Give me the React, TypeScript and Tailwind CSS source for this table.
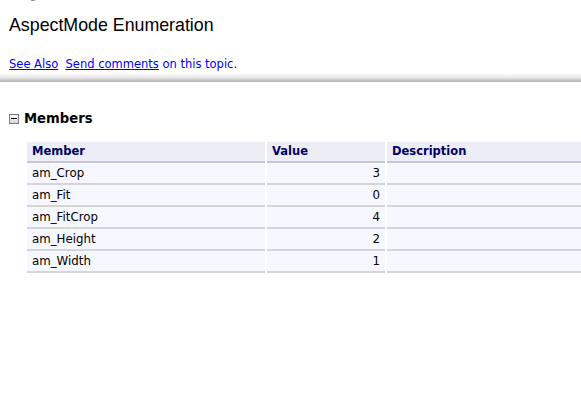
import React from "react";

const rows: [string, string][] = [
  ["am_Crop", "3"],
  ["am_Fit", "0"],
  ["am_FitCrop", "4"],
  ["am_Height", "2"],
  ["am_Width", "1"],
];

const verdana = { fontFamily: '"DejaVu Sans", Verdana, sans-serif' };

export default function App() {
  return (
    <div className="w-[581px] h-[411px] overflow-hidden bg-white" style={verdana}>
      <div className="h-[2px] overflow-hidden pl-[9px]">
        <div className="-mt-[11px] text-[11px] leading-[13px] text-[#888]">ImageGear ActiveX API Reference</div>
      </div>
      <div
        className="pl-[9px] pt-[13px] text-[17.8px] leading-[21px] text-black"
        style={{ fontFamily: '"Liberation Sans", Arial, sans-serif' }}
      >
        AspectMode Enumeration
      </div>
      <div className="pl-[9px] pt-[21px] text-[11.5px] leading-[15px] text-[#0000ff]">
        <span className="underline">See Also</span>
        <span>&nbsp;&nbsp;</span>
        <span className="underline">Send comments</span>
        <span> on this topic.</span>
      </div>
      <div className="mt-[1px] h-[9px] bg-gradient-to-b from-white via-[#e8e8e8] to-[#b0b0b0]" />
      <div className="flex items-center pl-[9px] pt-[28px]">
        <div className="w-[10px] h-[10px] border border-[#7a7a7a] bg-gradient-to-b from-white to-[#d6d6d6] flex items-center justify-center">
          <div className="w-[6px] h-[1px] bg-black" />
        </div>
        <div className="ml-[5px] text-[13.2px] leading-[17px] font-bold text-black">Members</div>
      </div>
      <div className="pl-[27px] pt-[15px] text-[11.8px] leading-[13px]">
        <div className="flex gap-[2px] text-[11.5px]">
          <div className="w-[238px] shrink-0 bg-[#ededf6] border-b-2 border-[#c6c6d8] px-[5px] pt-[3px] pb-[3px] font-bold text-[#000066]">Member</div>
          <div className="w-[118px] shrink-0 bg-[#ededf6] border-b-2 border-[#c6c6d8] px-[5px] pt-[3px] pb-[3px] font-bold text-[#000066]">Value</div>
          <div className="flex-1 bg-[#ededf6] border-b-2 border-[#c6c6d8] px-[5px] pt-[3px] pb-[3px] font-bold text-[#000066]">Description</div>
        </div>
        {rows.map(([name, val]) => (
          <div key={name} className="flex gap-[2px]">
            <div className="w-[238px] shrink-0 bg-[#f7f7ff] border-b-2 border-[#d5d5d5] px-[5px] pt-[4px] pb-[3px] text-black">{name}</div>
            <div className="w-[118px] shrink-0 bg-[#f7f7ff] border-b-2 border-[#d5d5d5] px-[5px] pt-[4px] pb-[3px] text-black text-right">{val}</div>
            <div className="flex-1 bg-[#f7f7ff] border-b-2 border-[#d5d5d5] px-[5px] pt-[4px] pb-[3px]">&nbsp;</div>
          </div>
        ))}
      </div>
    </div>
  );
}
